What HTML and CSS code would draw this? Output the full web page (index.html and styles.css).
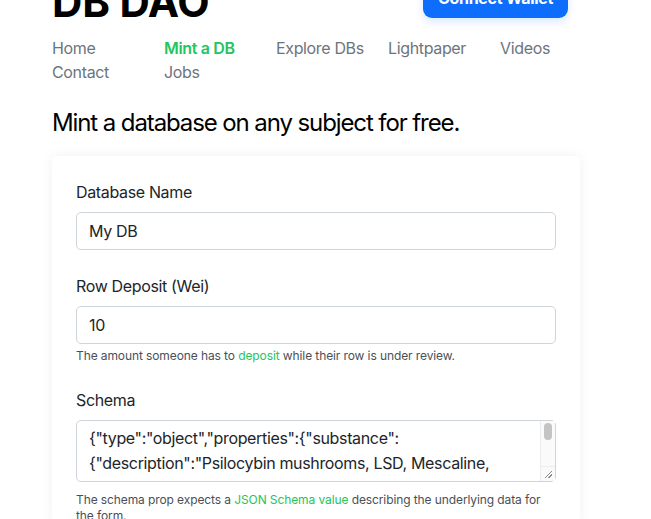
FILE: index.html
```html
<!DOCTYPE html>
<html lang="en">
<head>
<meta charset="utf-8">
<title>DB DAO – Mint a DB</title>
<link rel="stylesheet" href="styles.css">
</head>
<body>
<div class="page">
  <header class="header">
    <h1 class="brand">DB DAO</h1>
    <button class="btn-connect" type="button">Connect Wallet</button>
  </header>
  <nav class="nav">
    <a class="nav-link" href="#">Home</a>
    <a class="nav-link active" href="#">Mint a DB</a>
    <a class="nav-link" href="#">Explore DBs</a>
    <a class="nav-link" href="#">Lightpaper</a>
    <a class="nav-link" href="#">Videos</a>
    <a class="nav-link" href="#">Contact</a>
    <a class="nav-link" href="#">Jobs</a>
  </nav>
  <h2 class="title">Mint a database on any subject for free.</h2>
  <form class="card">
    <div class="field">
      <label class="label" for="name">Database Name</label>
      <input class="input" id="name" type="text" value="My DB">
    </div>
    <div class="field">
      <label class="label" for="deposit">Row Deposit (Wei)</label>
      <input class="input" id="deposit" type="text" value="10">
      <p class="help">The amount someone has to <a class="link" href="#">deposit</a> while their row is under review.</p>
    </div>
    <div class="field">
      <label class="label" for="schema">Schema</label>
      <div class="textarea-wrap">
        <textarea class="input textarea" id="schema">{"type":"object","properties":{"substance":{"description":"Psilocybin mushrooms, LSD, Mescaline, Ayahuasca, Ibogaine, DMT, Ketamine","type":"string","title":"Substance"},"dose":{"type":"string","title":"Dose"},"experience":{"type":"string","title":"Experience"}},"required":["substance","dose","experience"]}</textarea>
        <span class="sb-track"><span class="sb-thumb"></span></span>
        <span class="sb-corner"></span>
      </div>
      <p class="help help-schema">The schema prop expects a <a class="link" href="#">JSON Schema value</a> describing the underlying data for the form.</p>
    </div>
  </form>
</div>
</body>
</html>
```

FILE: styles.css
```css
html, body {
  margin: 0;
  padding: 0;
  background: #ffffff;
}

body {
  font-family: Inter, "Liberation Sans", sans-serif;
  color: #212529;
  font-size: 16px;
  line-height: 24px;
  letter-spacing: -0.35px;
  overflow: hidden;
}

.page {
  margin: -22px 0 0 52px;
  width: 528px;
}

.header {
  display: flex;
  justify-content: space-between;
  align-items: flex-start;
  width: 516px;
}

.brand {
  margin: 0;
  font-size: 42px;
  line-height: 48px;
  font-weight: 700;
  color: #000;
  letter-spacing: -0.2px;
}

.btn-connect {
  font-family: inherit;
  font-size: 16px;
  font-weight: 700;
  letter-spacing: -0.3px;
  color: #fff;
  background: #0d6efd;
  border: none;
  border-radius: 9px;
  height: 40px;
  padding: 0 15px;
  box-shadow: 0 4px 8px rgba(13, 110, 253, 0.15);
}

.nav {
  display: flex;
  flex-wrap: wrap;
  width: 560px;
  margin-top: 10px;
}

.nav-link {
  width: 112px;
  color: #6c757d;
  text-decoration: none;
  font-size: 16px;
  line-height: 24px;
}

.nav-link.active {
  color: #22c55e;
  font-weight: 600;
}

.title {
  margin: 24px 0 0;
  font-size: 24px;
  line-height: 29px;
  font-weight: 400;
  letter-spacing: -1.1px;
  color: #000;
}

.card {
  margin-top: 19px;
  padding: 24px 24px 0;
  background: #fff;
  box-shadow: 0 0 14px rgba(0, 0, 0, 0.06);
  border-radius: 4px;
  display: flex;
  flex-direction: column;
  gap: 24px;
}

.field {
  display: flex;
  flex-direction: column;
}

.label {
  font-size: 16px;
  line-height: 24px;
  margin-bottom: 8px;
  color: #212529;
}

.input {
  box-sizing: border-box;
  width: 480px;
  height: 38px;
  padding: 6px 12px;
  border: 1px solid #ced4da;
  border-radius: 5px;
  font-family: inherit;
  font-size: 16px;
  line-height: 24px;
  letter-spacing: -0.35px;
  color: #212529;
  background: #fff;
}

.textarea-wrap {
  position: relative;
  width: 480px;
  height: 62px;
}

.textarea {
  display: block;
  height: 62px;
  padding: 5px 28px 5px 12px;
  line-height: 25px;
  resize: vertical;
  overflow: hidden;
}

.sb-track {
  position: absolute;
  top: 1px;
  right: 1px;
  width: 14px;
  height: 45px;
  background: #fafafa;
  border-left: 1px solid #ececec;
}

.sb-thumb {
  position: absolute;
  top: 2px;
  left: 3px;
  width: 8px;
  height: 17px;
  border-radius: 4px;
  background: #c4c4c4;
}

.sb-corner {
  position: absolute;
  right: 1px;
  bottom: 1px;
  width: 14px;
  height: 14px;
  border-left: 1px solid #ececec;
  border-top: 1px solid #ececec;
  background: #fafafa;
  pointer-events: none;
}

.sb-corner::after {
  content: "";
  position: absolute;
  right: 3px;
  bottom: 3px;
  width: 7px;
  height: 7px;
  background: linear-gradient(135deg, transparent 45%, #8a8a8a 45%, #8a8a8a 55%, transparent 55%, transparent 70%, #8a8a8a 70%, #8a8a8a 80%, transparent 80%);
}

.help {
  margin: 4px 0 0;
  font-size: 12px;
  line-height: 16px;
  letter-spacing: -0.1px;
  color: #495057;
}

.help-schema {
  margin-top: 10px;
}

.link {
  color: #22c55e;
  text-decoration: none;
}
```
